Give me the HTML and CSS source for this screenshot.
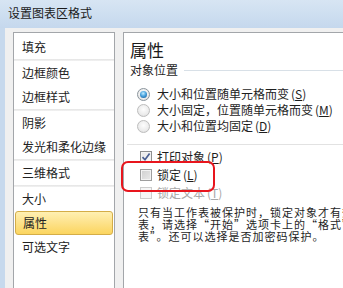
FILE: index.html
```html
<!DOCTYPE html>
<html lang="zh-CN">
<head>
<meta charset="utf-8">
<title>设置图表区格式</title>
<link rel="stylesheet" href="styles.css">
</head>
<body>
<div class="window">
  <div class="titlebar">设置图表区格式</div>
  <div class="client">
    <div class="nav">
      <div class="nav-item">填充</div>
      <div class="sep"></div>
      <div class="nav-item">边框颜色</div>
      <div class="nav-item">边框样式</div>
      <div class="sep"></div>
      <div class="nav-item">阴影</div>
      <div class="nav-item">发光和柔化边缘</div>
      <div class="sep"></div>
      <div class="nav-item">三维格式</div>
      <div class="sep"></div>
      <div class="nav-item">大小</div>
      <div class="nav-item active">属性</div>
      <div class="nav-item">可选文字</div>
    </div>
    <div class="page">
      <h1 class="page-title">属性</h1>
      <div class="group-head"><span>对象位置</span><span class="group-line"></span></div>
      <div class="radio-list">
        <div class="option"><span class="radio checked"></span><span>大小和位置随单元格而变<span class="key">(<u>S</u>)</span></span></div>
        <div class="option"><span class="radio"></span><span>大小固定，位置随单元格而变<span class="key">(<u>M</u>)</span></span></div>
        <div class="option"><span class="radio"></span><span>大小和位置均固定<span class="key">(<u>D</u>)</span></span></div>
      </div>
      <div class="divider"></div>
      <div class="check-list">
        <div class="option check-row"><span class="check checked"><svg width="10" height="10" viewBox="0 0 10 10"><path d="M1.5 5.2 L4 7.8 L8.6 1.6" fill="none" stroke="#4a5f92" stroke-width="1.7"/></svg></span><span>打印对象<span class="key">(<u>P</u>)</span></span></div>
        <div class="option check-row"><span class="check"></span><span>锁定<span class="key">(<u>L</u>)</span></span></div>
        <div class="option check-row disabled"><span class="check"></span><span>锁定文本<span class="key">(<u>T</u>)</span></span></div>
      </div>
      <div class="note">
        <div class="note-line">只有当工作表被保护时，锁定对象才有效。若要保护工作</div>
        <div class="note-line">表，请选择“开始”选项卡上的“格式”组中的“保护工作</div>
        <div class="note-line">表”。还可以选择是否加密码保护。</div>
      </div>
    </div>
  </div>
  <div class="callout"></div>
</div>
</body>
</html>
```
FILE: styles.css
```css
html, body {
  margin: 0;
  padding: 0;
}
body {
  width: 343px;
  height: 288px;
  overflow: hidden;
  background: #f0f0f0;
  font-family: "Noto Sans CJK SC", "Noto Sans", sans-serif;
  font-size: 12px;
  color: #1e1e1e;
}
.window {
  position: relative;
  width: 440px;
  height: 288px;
  display: flex;
  flex-direction: column;
  background: #f0f0f0;
}
.titlebar {
  flex: none;
  height: 28px;
  box-sizing: border-box;
  padding-left: 8px;
  line-height: 26px;
  font-size: 12px;
  color: #1a1a1a;
  background: linear-gradient(180deg, #d7e5f3 0%, #cddef0 55%, #c5d8ed 100%);
  white-space: nowrap;
}
.client {
  flex: 1;
  min-height: 0;
  display: flex;
  align-items: stretch;
  padding: 4px 0 0 8px;
  border-left: 5px solid #c7d9ed;
  background: #f0f0f0;
}
.nav {
  flex: none;
  width: 100px;
  border: 1px solid #a3a6aa;
  border-bottom: none;
  background: #fff;
  padding-top: 2px;
}
.nav-item {
  height: 24px;
  line-height: 24px;
  padding-left: 8px;
  white-space: nowrap;
  color: #222;
}
.nav-item.active {
  margin: 0 1px;
  padding-left: 7px;
  box-sizing: border-box;
  border: 1px solid #d4ad48;
  border-radius: 3px;
  line-height: 22px;
  background: linear-gradient(180deg, #fff0b2 0%, #fde38e 45%, #fbd55f 100%);
}
.sep {
  height: 2px;
  background: linear-gradient(180deg, #e4e4e4, #f2f2f2);
}
.page {
  flex: 1;
  margin-left: 8px;
  border: 1px solid #a3a6aa;
  border-right: none;
  border-bottom: none;
  background: #fff;
  padding: 7px 0 0 6px;
}
.page-title {
  margin: 0;
  font-size: 17px;
  font-weight: normal;
  line-height: 20px;
  color: #1b1b1b;
}
.group-head {
  display: flex;
  align-items: center;
  margin-top: 2px;
  height: 16px;
  line-height: 16px;
}
.group-line {
  flex: 1;
  height: 1px;
  margin-left: 6px;
  background: #d8e0e7;
}
.radio-list {
  margin-top: 8px;
}
.option {
  display: flex;
  align-items: center;
  height: 16px;
  line-height: 16px;
  white-space: nowrap;
}
.key {
  margin-left: 2px;
}
.radio {
  flex: none;
  width: 13px;
  height: 13px;
  box-sizing: border-box;
  margin: 0 7px;
  border-radius: 50%;
  border: 1px solid #bdbdbd;
  background: radial-gradient(circle at 50% 40%, #fdfdfd 0%, #ececec 60%, #d6d6d6 100%);
  display: flex;
  align-items: center;
  justify-content: center;
}
.radio.checked {
  border-color: #8a949c;
}
.radio.checked::after {
  content: "";
  width: 7px;
  height: 7px;
  border-radius: 50%;
  background: radial-gradient(circle at 45% 35%, #c2ecff 0%, #4aa3de 45%, #104f8c 100%);
}
.divider {
  height: 1px;
  margin: 10px 0 0 -3px;
  background: #e2e2e2;
}
.check-list {
  margin-top: 3px;
}
.check-row {
  height: 18px;
  line-height: 18px;
}
.check {
  flex: none;
  width: 12px;
  height: 12px;
  box-sizing: border-box;
  margin: 0 5px 0 10px;
  border: 1px solid #9e9e9e;
  box-shadow: inset 0 0 0 1px #f3f3f3;
  background: linear-gradient(135deg, #cfcfcf 0%, #eaeaea 100%);
  display: flex;
  align-items: center;
  justify-content: center;
}
.check.checked {
  border-color: #8e8f8f;
  background: linear-gradient(135deg, #e6e6e6 0%, #fbfbfb 100%);
}
.check svg {
  display: block;
}
.disabled {
  color: #a8a8a8;
}
.disabled .check {
  border-color: #cdcdcd;
  box-shadow: none;
  background: #f6f6f6;
}
.note {
  margin: 4px 0 0 8px;
}
.note-line {
  height: 12px;
  line-height: 12px;
  font-size: 11px;
  letter-spacing: 1px;
  white-space: nowrap;
}
.callout {
  position: absolute;
  left: 121px;
  top: 161px;
  width: 94px;
  height: 31px;
  box-sizing: border-box;
  border: 2px solid #e8151d;
  border-radius: 7px;
}
```
